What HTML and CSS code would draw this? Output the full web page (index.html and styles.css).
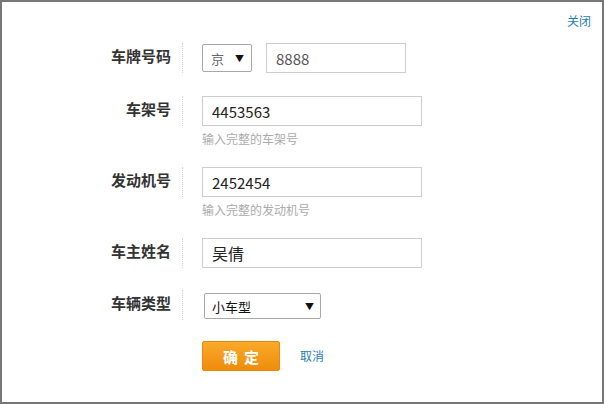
FILE: index.html
```html
<!DOCTYPE html>
<html lang="zh-CN">
<head>
    <meta charset="UTF-8">
    <title>车辆信息</title>
    <link rel="stylesheet" href="styles.css">
</head>
<body>
    <div class="dialog">
        <div class="dialog-head">
            <a class="close-link" href="#">关闭</a>
        </div>

        <div class="car-form">
            <div class="form-row row-plate">
                <div class="form-label">车牌号码</div>
                <div class="form-field field-inline">
                    <div class="fake-select select-province">
                        <span class="select-text">京</span>
                        <span class="select-arrow">▼</span>
                    </div>
                    <input class="text-input input-plate" type="text" value="8888">
                </div>
            </div>

            <div class="form-row row-hint">
                <div class="form-label">车架号</div>
                <div class="form-field">
                    <input class="text-input input-long" type="text" value="4453563">
                    <div class="field-hint">输入完整的车架号</div>
                </div>
            </div>

            <div class="form-row row-hint">
                <div class="form-label">发动机号</div>
                <div class="form-field">
                    <input class="text-input input-long" type="text" value="2452454">
                    <div class="field-hint">输入完整的发动机号</div>
                </div>
            </div>

            <div class="form-row row-owner">
                <div class="form-label">车主姓名</div>
                <div class="form-field">
                    <input class="text-input input-long input-name" type="text" value="吴倩">
                </div>
            </div>

            <div class="form-row row-type">
                <div class="form-label">车辆类型</div>
                <div class="form-field">
                    <div class="fake-select select-type">
                        <span class="select-text">小车型</span>
                        <span class="select-arrow">▼</span>
                    </div>
                </div>
            </div>

            <div class="form-actions">
                <button class="btn-ok" type="button">确定</button>
                <a class="cancel-link" href="#">取消</a>
            </div>
        </div>
    </div>
</body>
</html>
```

FILE: styles.css
```css
* {
    margin: 0;
    padding: 0;
    box-sizing: border-box;
}
body {
    font-family: "Noto Sans CJK SC", "Liberation Sans", sans-serif;
    background-color: #fff;
    color: #333;
}
.dialog {
    width: 604px;
    height: 404px;
    border: 2px solid #777;
    background-color: #fff;
}
.dialog-head {
    display: flex;
    justify-content: flex-end;
    padding: 10px 11px 0 0;
    height: 28px;
}
.close-link,
.cancel-link {
    font-size: 12px;
    line-height: 18px;
    color: #1f7db5;
    text-decoration: none;
}
.car-form {
    margin-top: 13px;
}
.form-row {
    display: flex;
    align-items: flex-start;
}
.row-plate {
    margin-bottom: 23px;
}
.row-hint {
    margin-bottom: 19px;
}
.row-owner {
    margin-bottom: 22px;
}
.row-type {
    margin-bottom: 21px;
}
.form-label {
    width: 181px;
    height: 30px;
    padding-right: 11px;
    border-right: 1px dotted #d6d6d6;
    text-align: right;
    font-size: 15px;
    font-weight: bold;
    line-height: 26px;
    color: #333;
}
.form-field {
    margin-left: 19px;
}
.field-inline {
    display: flex;
    align-items: center;
    gap: 14px;
    height: 30px;
}
.text-input {
    height: 30px;
    border: 1px solid #ccc;
    padding: 0 9px;
    font-family: "Noto Sans CJK SC", "Liberation Sans", sans-serif;
    font-size: 15px;
    color: #222;
    outline: none;
    background-color: #fff;
}
.input-plate {
    width: 140px;
    color: #555;
}
.input-long {
    width: 220px;
}
.input-name {
    font-size: 16px;
}
.field-hint {
    margin-top: 4px;
    font-size: 12px;
    line-height: 18px;
    color: #aaa;
}
.fake-select {
    display: flex;
    align-items: center;
    justify-content: space-between;
    border: 1px solid #a8a8a8;
    border-radius: 2px;
    background-color: #fff;
}
.select-province {
    width: 50px;
    height: 28px;
    padding: 0 7px 0 8px;
    font-size: 13px;
    color: #666;
}
.select-type {
    width: 117px;
    height: 26px;
    margin: 3px 0 0 2px;
    padding: 0 6px 0 7px;
    font-size: 13px;
    color: #111;
}
.select-arrow {
    font-size: 9px;
    color: #111;
}
.form-actions {
    display: flex;
    align-items: center;
    gap: 20px;
    padding-left: 200px;
}
.btn-ok {
    width: 78px;
    height: 30px;
    border: 1px solid #e38a0e;
    border-radius: 2px;
    background: linear-gradient(#f9a92a, #ef8c0b);
    color: #fff;
    font-family: "Noto Sans CJK SC", "Liberation Sans", sans-serif;
    font-size: 15px;
    font-weight: bold;
    letter-spacing: 6px;
    padding-left: 6px;
    cursor: pointer;
}
```
